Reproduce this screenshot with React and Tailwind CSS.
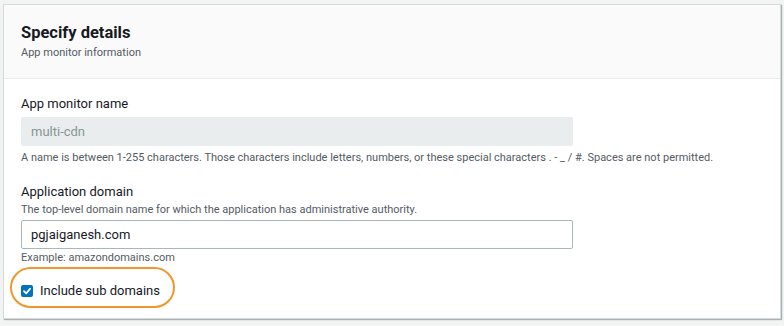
import React from 'react';

const font = { fontFamily: 'Roboto, "Liberation Sans", sans-serif' };

export default function App() {
  return (
    <div className="w-[784px] h-[326px] bg-[#f2f3f3] pt-[4px] pl-[3px] pr-[3px]" style={font}>
      <div className="bg-white border border-[#d5dbdb] shadow-[1px_1px_1px_0_rgba(0,28,36,0.3)] h-[315px]">
        <div className="bg-[#fafafa] border-b border-[#eaeded] h-[74px] pl-[17px] pt-[17px]">
          <h2 className="text-[16.5px] leading-[21px] font-bold text-[#16191f]">Specify details</h2>
          <p className="text-[11px] leading-[16px] text-[#545b64] mt-[2px]">App monitor information</p>
        </div>
        <div className="pl-[17px] pt-[14px]">
          <div className="text-[13px] leading-[22px] text-[#16191f]">App monitor name</div>
          <div className="mt-[2px] w-[552px] h-[29px] bg-[#eaeded] rounded-[2px] flex items-center px-[10px] text-[13px] text-[#879596]">
            multi-cdn
          </div>
          <p className="text-[11px] leading-[16px] text-[#545b64] mt-[4px] whitespace-nowrap">
            A name is between 1-255 characters. Those characters include letters, numbers, or these special characters . - _ / #. Spaces are not permitted.
          </p>

          <div className="text-[13px] leading-[22px] text-[#16191f] mt-[15px]">Application domain</div>
          <p className="text-[11px] leading-[16px] text-[#545b64] -mt-[1px]">
            The top-level domain name for which the application has administrative authority.
          </p>
          <div className="mt-[2px] w-[552px] h-[29px] bg-white border border-[#aab7b8] rounded-[2px] flex items-center px-[9px] text-[13px] text-[#16191f]">
            pgjaiganesh.com
          </div>
          <p className="text-[11px] leading-[16px] text-[#545b64] mt-[1px]">Example: amazondomains.com</p>

          <div className="relative mt-[16px] flex items-center gap-[7px] h-[18px]">
            <span className="absolute left-[-11px] top-[-15px] w-[165px] h-[41px] rounded-[21px] border-2 border-[#f0962c]" />
            <span className="w-[12px] h-[12px] bg-[#0073bb] rounded-[2px] flex items-center justify-center">
              <svg width="10" height="10" viewBox="0 0 10 10">
                <path d="M2 5.2 L4.2 7.3 L8 2.8" fill="none" stroke="white" strokeWidth="1.8" strokeLinecap="round" strokeLinejoin="round" />
              </svg>
            </span>
            <span className="text-[13px] text-[#16191f]">Include sub domains</span>
          </div>
        </div>
      </div>
    </div>
  );
}
